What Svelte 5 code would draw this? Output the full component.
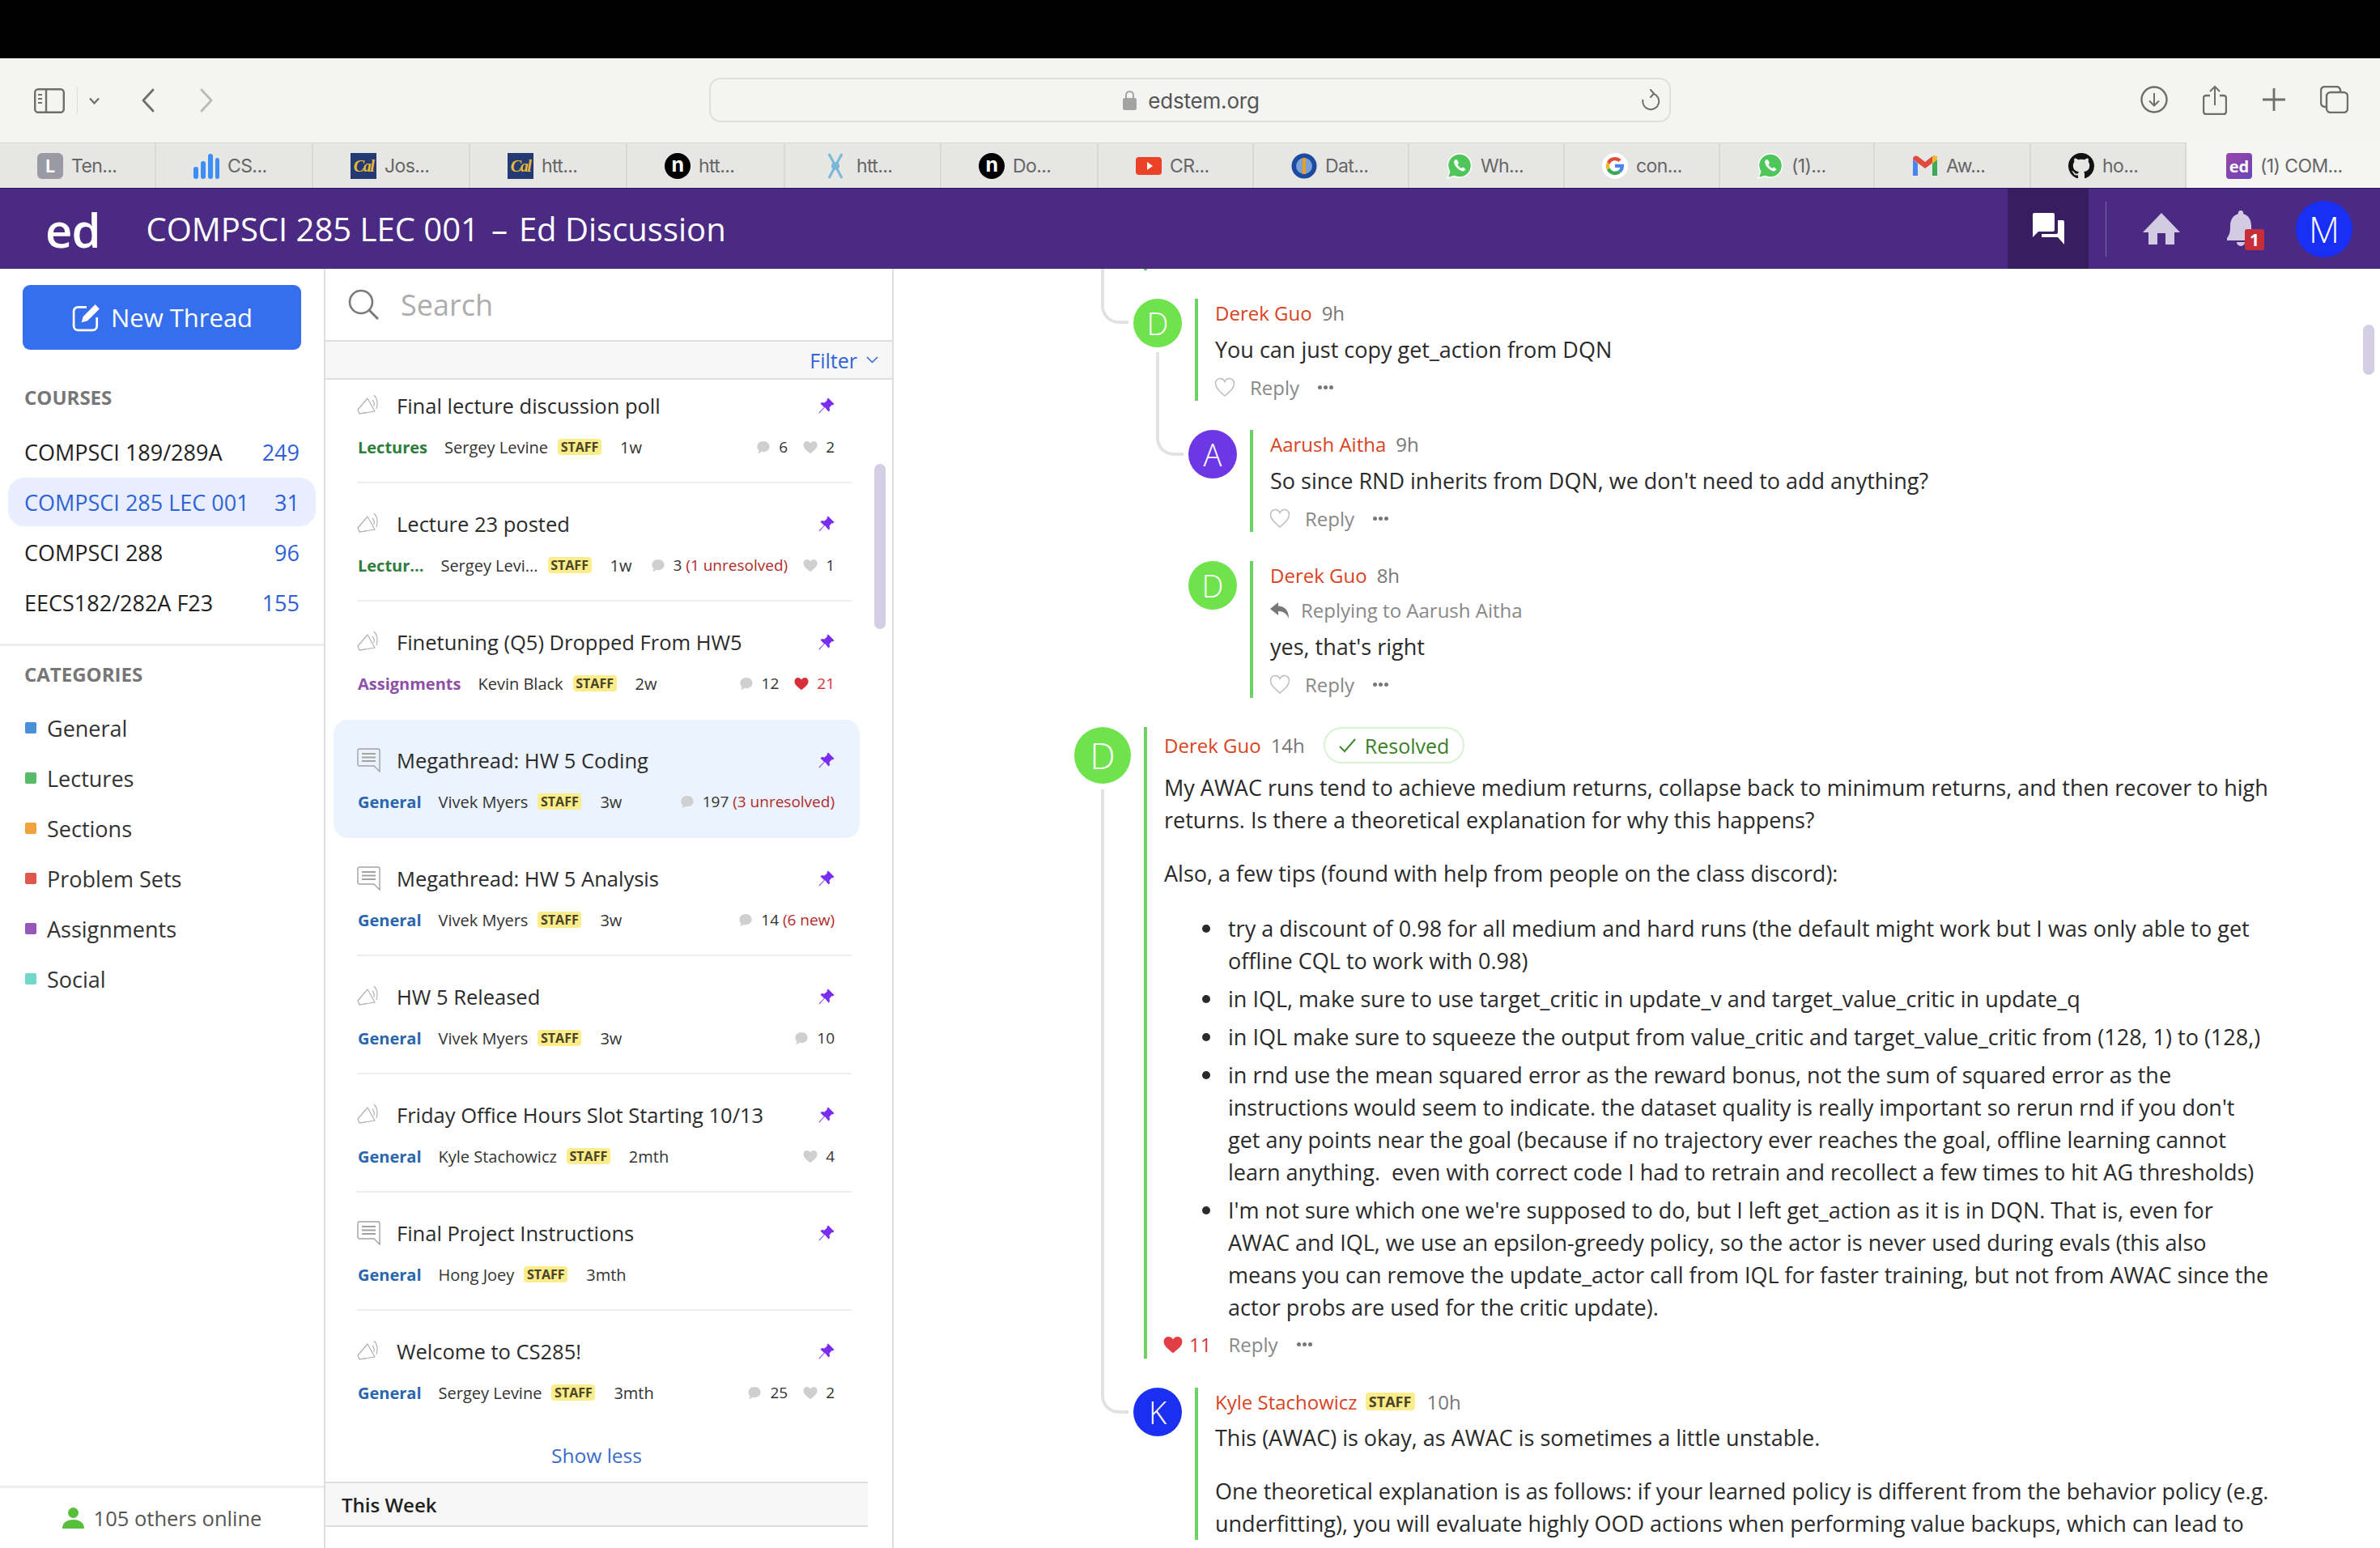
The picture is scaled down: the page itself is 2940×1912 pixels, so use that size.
<script>
  const tabs = [
    { k: 'L', t: 'Ten...', w: 193 }, { k: 'bars', t: 'CS...', w: 194 }, { k: 'cal', t: 'Jos...', w: 194 }, { k: 'cal', t: 'htt...', w: 194 },
    { k: 'n', t: 'htt...', w: 195 }, { k: 'x', t: 'htt...', w: 193 }, { k: 'n', t: 'Do...', w: 194 }, { k: 'yt', t: 'CR...', w: 192 },
    { k: 'dat', t: 'Dat...', w: 192 }, { k: 'wa', t: 'Wh...', w: 192 }, { k: 'g', t: 'con...', w: 192 }, { k: 'wa', t: '(1)...', w: 191 },
    { k: 'gm', t: 'Aw...', w: 193 }, { k: 'gh', t: 'ho...', w: 192 }
  ];
  const courses = [
    { n: 'COMPSCI 189/289A', c: 249 }, { n: 'COMPSCI 285 LEC 001', c: 31, active: true },
    { n: 'COMPSCI 288', c: 96 }, { n: 'EECS182/282A F23', c: 155 }
  ];
  const categories = [
    { n: 'General', c: '#4a90d9' }, { n: 'Lectures', c: '#57bb6a' }, { n: 'Sections', c: '#f0a33c' },
    { n: 'Problem Sets', c: '#e0574c' }, { n: 'Assignments', c: '#9557b8' }, { n: 'Social', c: '#6fd8c8' }
  ];
  const threads = [
    { i: 'mega', title: 'Final lecture discussion poll', cat: 'Lectures', cc: 'green', author: 'Sergey Levine', time: '1w', com: '6', likes: '2' },
    { i: 'mega', title: 'Lecture 23 posted', cat: 'Lectur...', cc: 'green', author: 'Sergey Levi...', time: '1w', com: '3', extra: '(1 unresolved)', likes: '1' },
    { i: 'mega', title: 'Finetuning (Q5) Dropped From HW5', cat: 'Assignments', cc: 'purple', author: 'Kevin Black', time: '2w', com: '12', likes: '21', liked: true, nodiv: true },
    { i: 'post', title: 'Megathread: HW 5 Coding', cat: 'General', cc: 'blue', author: 'Vivek Myers', time: '3w', com: '197', extra: '(3 unresolved)', sel: true, nodiv: true },
    { i: 'post', title: 'Megathread: HW 5 Analysis', cat: 'General', cc: 'blue', author: 'Vivek Myers', time: '3w', com: '14', extra: '(6 new)' },
    { i: 'mega', title: 'HW 5 Released', cat: 'General', cc: 'blue', author: 'Vivek Myers', time: '3w', com: '10' },
    { i: 'mega', title: 'Friday Office Hours Slot Starting 10/13', cat: 'General', cc: 'blue', author: 'Kyle Stachowicz', time: '2mth', likes: '4' },
    { i: 'post', title: 'Final Project Instructions', cat: 'General', cc: 'blue', author: 'Hong Joey', time: '3mth' },
    { i: 'mega', title: 'Welcome to CS285!', cat: 'General', cc: 'blue', author: 'Sergey Levine', time: '3mth', com: '25', likes: '2', nodiv: true }
  ];
</script>

{#snippet bubble()}
  <svg class="stat-ico" viewBox="0 0 18 18"><path d="M9 1c4.600 0 8 3 8 7s-3.400 7-8 7c-.9 0-1.800-.1-2.600-.4C5 16 3 17 1.500 17c1-1 1.500-2.300 1.600-3.700C1.800 12 1 10.100 1 8c0-4 3.400-7 8-7z" fill="#cfcfcf"/></svg>
{/snippet}
{#snippet heart(color, cls = 'stat-ico')}
  <svg class={cls} viewBox="0 0 20 18"><path d="M10 17.500C4 13 .5 9.800.5 5.700.5 2.800 2.700.7 5.300.7c2 0 3.700 1 4.700 2.800C11 1.700 12.700.7 14.700.7c2.600 0 4.800 2.100 4.800 5 0 4.100-3.500 7.300-9.500 11.800z" fill={color}/></svg>
{/snippet}
{#snippet outlineHeart()}
  <svg class="heart-line" viewBox="0 0 26 26"><path d="M13 24C6 18 1.500 14 1.500 8.500 1.500 4.800 4.300 2.500 7.300 2.500c2.500 0 4.600 1.500 5.700 4 1.100-2.500 3.200-4 5.700-4 3 0 5.800 2.300 5.800 6C24.500 14 20 18 13 24z" fill="none" stroke="#bdbdbd" stroke-width="1.500"/></svg>
{/snippet}
{#snippet actions()}
  <div class="actions">
    {@render outlineHeart()}
    <span class="reply">Reply</span>
    <span class="dots"><i></i><i></i><i></i></span>
  </div>
{/snippet}

<div class="page">
  <div class="blackbar"></div>

  <div class="toolbar">
    <div class="tb-left">
      <svg width="38" height="31" viewBox="0 0 38 31" fill="none" stroke="#6e6e6c" stroke-width="2.400"><rect x="1.200" y="1.200" width="35.600" height="28.600" rx="4"/><path d="M15 1.200v28.600"/><path d="M5 8h5M5 13h5M5 18h5" stroke-width="2"/></svg>
      <span class="tb-sep"></span>
      <svg width="15" height="9" viewBox="0 0 15 9" fill="none" stroke="#6e6e6c" stroke-width="2.200"><path d="M2 1.500l5.500 6 5.500-6"/></svg>
      <svg class="back" width="17" height="30" viewBox="0 0 17 30" fill="none" stroke="#6e6e6c" stroke-width="2.800" stroke-linecap="round" stroke-linejoin="round"><path d="M15 2L3 15l12 13"/></svg>
      <svg class="fwd" width="17" height="30" viewBox="0 0 17 30" fill="none" stroke="#b9b9b7" stroke-width="2.800" stroke-linecap="round" stroke-linejoin="round"><path d="M2 2l12 13L2 28"/></svg>
    </div>
    <div class="urlbar">
      <div class="url-center">
        <svg width="17" height="25" viewBox="0 0 17 25"><path d="M4 11V6.500a4.500 4.500 0 019 0V11" fill="none" stroke="#a3a3a3" stroke-width="2"/><rect x="0" y="10" width="17" height="15" rx="2.500" fill="#a3a3a3"/></svg>
        <span class="url">edstem.org</span>
      </div>
      <svg class="reload" width="24" height="27" viewBox="0 0 24 27" fill="none" stroke="#6e6e6c" stroke-width="2"><path d="M15 5.500A10 10 0 112.500 13"/><path d="M12 1l4 4.500-4 4.500" stroke-linecap="round"/></svg>
    </div>
    <div class="tb-right">
      <svg width="34" height="34" viewBox="0 0 34 34" fill="none" stroke="#6e6e6c" stroke-width="2.400"><circle cx="17" cy="17" r="15.500"/><path d="M17 9v15M11 18.500l6 6 6-6" stroke-width="2"/></svg>
      <svg width="30" height="37" viewBox="0 0 30 37" fill="none" stroke="#6e6e6c" stroke-width="2.400"><path d="M9 13H4a3 3 0 00-3 3v17a3 3 0 003 3h22a3 3 0 003-3V16a3 3 0 00-3-3h-5"/><path d="M15 25V2M9 8l6-6 6 6" stroke-width="2"/></svg>
      <svg width="28" height="28" viewBox="0 0 28 28" stroke="#6e6e6c" stroke-width="2.800"><path d="M14 0v28M0 14h28"/></svg>
      <svg width="35" height="34" viewBox="0 0 35 34" fill="none" stroke="#6e6e6c" stroke-width="2.400"><rect x="8" y="8" width="26" height="25" rx="5"/><path d="M8 26H6a5 5 0 01-5-5V6a5 5 0 015-5h14a5 5 0 015 5v2"/></svg>
    </div>
  </div>

  <div class="tabs">
    {#each tabs as tab}
      <div class="tab" style="width:{tab.w}px">
        {#if tab.k === 'L'}<span class="fav fav-l">L</span>
        {:else if tab.k === 'bars'}
          <svg class="fav" viewBox="0 0 32 32" fill="#3e8ef7"><rect x="0" y="17" width="6" height="15" rx="3"/><rect x="9" y="10" width="6" height="22" rx="3"/><rect x="18" y="1" width="6" height="31" rx="3"/><rect x="27" y="6" width="5" height="26" rx="2.500"/></svg>
        {:else if tab.k === 'cal'}<span class="fav fav-cal">Cal</span>
        {:else if tab.k === 'n'}<span class="fav fav-n">n</span>
        {:else if tab.k === 'x'}
          <svg class="fav" viewBox="0 0 32 32" fill="none" stroke="#7ab8d8" stroke-width="3"><path d="M8 1l16 30M24 1L8 31"/><circle cx="16" cy="16" r="5" fill="#7ab8d8" stroke="none"/></svg>
        {:else if tab.k === 'yt'}
          <svg class="fav" viewBox="0 0 32 32"><rect x="0" y="5" width="32" height="22" rx="4" fill="#ea4127"/><path d="M14 11l7 5-7 5z" fill="#fff"/></svg>
        {:else if tab.k === 'dat'}
          <svg class="fav" viewBox="0 0 32 32"><ellipse cx="16" cy="16" rx="15.500" ry="15.500" fill="#1e4aa0"/><circle cx="16" cy="16" r="10" fill="#7aa2d8"/><rect x="14" y="6" width="4" height="20" fill="#e8a020"/></svg>
        {:else if tab.k === 'wa'}
          <svg class="fav" viewBox="0 0 32 32"><path d="M16 1C7.700 1 1.500 7.500 1.500 15.500c0 2.800.8 5.500 2.200 7.700L1 31l8-2.500C11 29.500 13.500 30 16 30c8.300 0 14.500-6.500 14.500-14.500S24.300 1 16 1z" fill="#4fc65a" stroke="#fff" stroke-width="1.500"/><path d="M11 8c-2 1-2.500 3.500-1 6.500 1.500 3 4.500 6 8 7.500 2.500 1 4.500 0 5.500-2l-3.500-2.500-1.700 1.500c-2-1-3.800-2.800-4.800-5l1.500-1.500L13 8.500z" fill="#fff"/></svg>
        {:else if tab.k === 'g'}
          <svg class="fav" viewBox="0 0 32 32"><circle cx="16" cy="16" r="16" fill="#fff"/><path d="M16 5a11 11 0 017.600 3l-3 3A6.800 6.800 0 0016 9.300c-3 0-5.500 2-6.500 4.700L6 11.200A11 11 0 0116 5z" fill="#e04a3c"/><path d="M6 11.200L9.500 14a7 7 0 000 4.200L6 20.900a11 11 0 010-9.700z" fill="#f4b820"/><path d="M6 20.900l3.500-2.700c1 2.700 3.500 4.600 6.500 4.600 1.600 0 3-.4 4-1.200l3.300 2.700A11 11 0 016 20.900z" fill="#38a954"/><path d="M27 16c0 3.200-1.200 6.100-3.700 8.300L20 21.600c1.100-.8 1.900-2.100 2.300-3.700H16v-4.200h10.800c.1.700.2 1.500.2 2.300z" fill="#4a84f0"/></svg>
        {:else if tab.k === 'gm'}
          <svg class="fav" viewBox="0 0 32 32"><path d="M1 8l15 11L31 8v-1a4 4 0 00-6-3L16 11 7 4a4 4 0 00-6 3z" fill="#df4b3c"/><path d="M1 8v20h6V13z" fill="#4a84f0"/><path d="M31 8v20h-6V13z" fill="#3eaa55"/><path d="M25 4l6 0v4l-6 5z" fill="#f5bb2c"/></svg>
        {:else if tab.k === 'gh'}
          <svg class="fav" viewBox="0 0 16 16" fill="#111"><path d="M8 0C3.580 0 0 3.580 0 8c0 3.540 2.290 6.530 5.470 7.590.4.070.55-.17.55-.38 0-.19-.01-.82-.01-1.490-2.010.37-2.530-.49-2.690-.94-.09-.23-.48-.94-.82-1.130-.28-.15-.68-.52-.01-.53.630-.01 1.080.58 1.230.82.720 1.210 1.870.87 2.330.66.070-.52.280-.87.510-1.070-1.780-.2-3.640-.89-3.640-3.950 0-.87.310-1.590.820-2.150-.08-.2-.36-1.020.08-2.120 0 0 .67-.21 2.200.82.640-.18 1.320-.27 2-.27s1.360.09 2 .27c1.530-1.040 2.200-.82 2.200-.82.440 1.100.160 1.920.080 2.120.510.560.820 1.270.820 2.150 0 3.070-1.870 3.750-3.650 3.950.290.250.540.730.540 1.480 0 1.070-.01 1.930-.01 2.200 0 .210.150.460.550.380A8.010 8.010 0 0016 8c0-4.420-3.580-8-8-8z"/></svg>
        {/if}
        <span>{tab.t}</span>
      </div>
    {/each}
    <div class="tab active"><span class="fav fav-ed">ed</span><span>(1) COM...</span></div>
  </div>

  <header class="header">
    <span class="logo">ed</span>
    <span class="title">COMPSCI 285 LEC 001<span class="dash">–</span>Ed Discussion</span>
    <div class="hdr-right">
      <div class="hdr-chat">
        <svg width="39" height="39" viewBox="0 0 39 39" fill="#fff"><path d="M0 2a2 2 0 012-2h23a2 2 0 012 2v19a2 2 0 01-2 2H7l-7 7z"/><path d="M31 9h6a2 2 0 012 2v28l-8-9H11v-4h18a2 2 0 002-2z"/></svg>
      </div>
      <span class="hdr-sep"></span>
      <svg class="home" width="46" height="39" viewBox="0 0 46 39" fill="#d2cbe2"><path d="M23 0l23 24h-7v15H28V25H18v14H7V24H0z"/></svg>
      <div class="bell">
        <svg width="36" height="46" viewBox="0 0 36 46" fill="#d2cbe2"><path d="M18 0a3 3 0 013 4c7 2 10 8 10 15 0 8 1 11 4 15v3H1v-3c3-4 4-7 4-15 0-7 3-13 10-15a3 3 0 013-4z"/><path d="M13 39h10a5 5 0 01-10 0z"/></svg>
        <span class="bell-badge">1</span>
      </div>
      <span class="me">M</span>
    </div>
  </header>

  <div class="body">
    <aside class="sidebar">
      <button class="new-thread">
        <svg width="36" height="36" viewBox="0 0 34 34" fill="none"><path d="M17 5H7a5 5 0 00-5 5v17a5 5 0 005 5h17a5 5 0 005-5V17" stroke="#fff" stroke-width="2.600"/><path d="M27 2l5 5-14 14-7 2 2-7z" fill="#fff"/></svg>
        <span>New Thread</span>
      </button>
      <div class="side-label first">COURSES</div>
      <div class="courses">
        {#each courses as c}
          <div class="course" class:active={c.active}><span>{c.n}</span><span class="count">{c.c}</span></div>
        {/each}
      </div>
      <div class="side-div"></div>
      <div class="side-label">CATEGORIES</div>
      <div class="cats">
        {#each categories as cat}
          <div class="cat"><i class="sq" style="background:{cat.c}"></i><span>{cat.n}</span></div>
        {/each}
      </div>
      <div class="online">
        <svg width="27" height="26" viewBox="0 0 27 26" fill="#58bf3c"><ellipse cx="13.500" cy="6.500" rx="6.500" ry="6.500"/><path d="M0 26c0-7 5-11 13.500-11S27 19 27 26z"/></svg>
        <span>105 others online</span>
      </div>
    </aside>

    <section class="list">
      <div class="search">
        <svg width="38" height="38" viewBox="0 0 38 38" fill="none" stroke="#7a7a7a" stroke-width="2.600"><circle cx="16" cy="16" r="14"/><path d="M26 26l11 11" stroke-width="3"/></svg>
        <span>Search</span>
      </div>
      <div class="filter">
        <span>Filter</span>
        <svg width="15" height="9" viewBox="0 0 15 9" fill="none" stroke="#2f63d6" stroke-width="1.500"><path d="M1 1l6.500 6.500L14 1"/></svg>
      </div>
      <div class="scroll">
        <div class="scroll-in">
          {#each threads as t}
            <article class="thread" class:sel={t.sel} class:nodiv={t.nodiv}>
              <div class="t-title">
                {#if t.i === 'mega'}
                  <svg class="t-ico" width="30" height="30" viewBox="0 0 30 30" fill="none" stroke="#b0b0b0" stroke-width="1.200"><path d="M13 6L1 20l2 5 19-3z" stroke-linejoin="round"/><path d="M3 25l8-1"/><path d="M19 8c2 2 2.500 5 2 8" /><path d="M21 2c4 4 5 10 3 17"/></svg>
                {:else}
                  <svg class="t-ico" width="30" height="30" viewBox="0 0 30 30" fill="none" stroke="#a2a2a2" stroke-width="1.400"><path d="M3 1h23a2 2 0 012 2v26l-7-7H3a2 2 0 01-2-2V3a2 2 0 012-2z"/><path d="M6 7h17M6 11.500h17M6 16h17" stroke-width="1.800"/></svg>
                {/if}
                <span class="t-text">{t.title}</span>
                <svg class="pin" width="20" height="20" viewBox="0 0 20 20" fill="#7b2cf2"><path d="M12 .5l7.500 7.500-1.800 1.500-1-.6-3.200 3.700.5 3.400-1.500 1.500L8 12 2 18.500 1 19.500.500 19l1-1.500L7 12 2.500 7.500 4 6l3.400.5L11 3.300l-.6-1z"/></svg>
              </div>
              <div class="t-meta">
                <span class="t-cat {t.cc}">{t.cat}</span>
                <span class="t-author">{t.author}</span>
                <span class="staff">STAFF</span>
                <span class="t-time">{t.time}</span>
                <span class="t-stats">
                  {#if t.com}
                    <span class="stat">{@render bubble()}<span class="num">{t.com}{#if t.extra}&nbsp;<b>{t.extra}</b>{/if}</span></span>
                  {/if}
                  {#if t.likes}
                    <span class="stat">{@render heart(t.liked ? '#d8303a' : '#cfcfcf')}<span class="num" class:liked={t.liked}>{t.likes}</span></span>
                  {/if}
                </span>
              </div>
            </article>
          {/each}
          <div class="show-less">Show less</div>
          <div class="week">This Week</div>
        </div>
        <span class="list-thumb"></span>
      </div>
    </section>

    <main class="content">
      <div class="stub"></div>
      <div class="conn c1"></div>
      <div class="conn c2"></div>
      <div class="conn c3"></div>

      <div class="comment l2">
        <span class="av green">D</span>
        <div class="c-body">
          <div class="c-head"><span class="name">Derek Guo</span><span class="when">9h</span></div>
          <p class="c-text">You can just copy get_action from DQN</p>
          {@render actions()}
        </div>
      </div>

      <div class="comment l3">
        <span class="av purple">A</span>
        <div class="c-body">
          <div class="c-head"><span class="name">Aarush Aitha</span><span class="when">9h</span></div>
          <p class="c-text">So since RND inherits from DQN, we don't need to add anything?</p>
          {@render actions()}
        </div>
      </div>

      <div class="comment l3">
        <span class="av green">D</span>
        <div class="c-body">
          <div class="c-head"><span class="name">Derek Guo</span><span class="when">8h</span></div>
          <div class="replying">
            <svg width="24" height="20" viewBox="0 0 24 20" fill="#777"><path d="M10 0L0 8l10 8v-5c6 0 10 2 13 9 0-9-4-15-13-15.500z"/></svg>
            <span>Replying to Aarush Aitha</span>
          </div>
          <p class="c-text">yes, that's right</p>
          {@render actions()}
        </div>
      </div>

      <div class="comment l1">
        <span class="av green big">D</span>
        <div class="c-body">
          <div class="c-head tall">
            <span class="name">Derek Guo</span><span class="when">14h</span>
            <span class="resolved">
              <svg width="21" height="18" viewBox="0 0 21 18" fill="none" stroke="#3e8a2a" stroke-width="2"><path d="M1 10l6 6L20 1"/></svg>
              <span>Resolved</span>
            </span>
          </div>
          <div class="rich">
            <p>My AWAC runs tend to achieve medium returns, collapse back to minimum returns, and then recover to high<br>returns. Is there a theoretical explanation for why this happens?</p>
            <p>Also, a few tips (found with help from people on the class discord):</p>
            <ul>
              <li>try a discount of 0.98 for all medium and hard runs (the default might work but I was only able to get<br>offline CQL to work with 0.98)</li>
              <li>in IQL, make sure to use target_critic in update_v and target_value_critic in update_q</li>
              <li>in IQL make sure to squeeze the output from value_critic and target_value_critic from (128, 1) to (128,)</li>
              <li>in rnd use the mean squared error as the reward bonus, not the sum of squared error as the<br>instructions would seem to indicate. the dataset quality is really important so rerun rnd if you don't<br>get any points near the goal (because if no trajectory ever reaches the goal, offline learning cannot<br>learn anything.&nbsp; even with correct code I had to retrain and recollect a few times to hit AG thresholds)</li>
              <li>I'm not sure which one we're supposed to do, but I left get_action as it is in DQN. That is, even for<br>AWAC and IQL, we use an epsilon-greedy policy, so the actor is never used during evals (this also<br>means you can remove the update_actor call from IQL for faster training, but not from AWAC since the<br>actor probs are used for the critic update).</li>
            </ul>
          </div>
          <div class="actions main-act">
            {@render heart('#e23f44', 'heart-red')}
            <span class="likes">11</span>
            <span class="reply">Reply</span>
            <span class="dots"><i></i><i></i><i></i></span>
          </div>
        </div>
      </div>

      <div class="comment l2">
        <span class="av blue">K</span>
        <div class="c-body">
          <div class="c-head"><span class="name">Kyle Stachowicz</span><span class="staff big">STAFF</span><span class="when">10h</span></div>
          <div class="rich k">
            <p>This (AWAC) is okay, as AWAC is sometimes a little unstable.</p>
            <p>One theoretical explanation is as follows: if your learned policy is different from the behavior policy (e.g.<br>underfitting), you will evaluate highly OOD actions when performing value backups, which can lead to</p>
          </div>
        </div>
      </div>

      <span class="main-thumb"></span>
    </main>
  </div>
</div>

<style>
  :global(body) { margin: 0; background: #fff; }
  .page { width: 2940px; height: 1912px; display: flex; flex-direction: column; overflow: hidden; font-family: "Open Sans", "Noto Sans", sans-serif; color: #2a2a2a; }
  .blackbar { height: 72px; background: #000; flex: none; }

  .toolbar { height: 104px; flex: none; background: #f4f4f2; display: flex; align-items: center; position: relative; }
  .tb-left { width: 876px; display: flex; align-items: center; padding-left: 42px; box-sizing: border-box; }
  .tb-sep { width: 1px; height: 34px; background: #dcdcda; margin: 0 13px 0 15px; }
  .back { margin-left: 50px; }
  .fwd { margin-left: 56px; }
  .urlbar { width: 1188px; height: 55px; box-sizing: border-box; border: 2px solid #dfdfdd; border-radius: 14px; display: flex; align-items: center; justify-content: center; position: relative; margin-top: -1px; }
  .url-center { display: flex; align-items: center; gap: 14px; margin-left: 3px; }
  .url { font-family: "Inter", "Liberation Sans", sans-serif; font-size: 26px; color: #555; letter-spacing: -0.2px; margin-top: 1px; }
  .reload { position: absolute; right: 11px; top: 12px; }
  .tb-right { flex: 1; display: flex; align-items: center; justify-content: flex-end; gap: 43px; padding-right: 39px; margin-top: -2px; }
  .tb-right svg:nth-child(2) { margin-right: 1px; }

  .tabs { height: 56px; flex: none; display: flex; background: #e6e6e4; box-shadow: inset 0 1px 0 #d6d6d4; }
  .tab { flex: none; display: flex; align-items: center; gap: 10px; border-right: 2px solid #d8d8d6; font-size: 23px; color: #666; font-family: "Inter", "Liberation Sans", sans-serif; letter-spacing: -0.6px; padding: 2px 0 0 46px; box-sizing: border-box; white-space: nowrap; overflow: hidden; }
  .tab.active { flex: 1; background: #f5f5f3; border-right: none; box-shadow: none; padding-left: 49px; }
  .fav { width: 32px; height: 32px; flex: none; display: flex; align-items: center; justify-content: center; box-sizing: border-box; }
  .fav-l { background: #9a9aa4; color: #fff; border-radius: 6px; font-weight: 700; font-size: 21px; }
  .fav-cal { background: #233a72; color: #e9b93a; font: italic 700 20px "Liberation Serif", serif; letter-spacing: -1.5px; overflow: hidden; }
  .fav-n { background: #000; color: #fff; border-radius: 50%; font-weight: 700; font-size: 25px; padding-bottom: 5px; }
  .fav-ed { background: linear-gradient(135deg, #9a46a8, #6a44b8); color: #fff; border-radius: 4px; font: 700 20px "Open Sans", sans-serif; letter-spacing: 0; }

  .header { height: 100px; flex: none; background: #4b2a84; border-top: 1px solid #2e1466; box-sizing: border-box; display: flex; align-items: center; color: #fff; }
  .logo { font-size: 58px; font-weight: 600; margin-left: 56px; line-height: 1; letter-spacing: -1px; margin-top: 2px; }
  .title { font-size: 40px; margin-left: 57px; font-weight: 400; }
  .dash { margin: 0 14px 0 15px; }
  .hdr-right { margin-left: auto; height: 100%; display: flex; align-items: center; }
  .hdr-chat { width: 100px; height: 100%; background: #381e60; display: flex; align-items: center; justify-content: center; }
  .hdr-sep { width: 1px; height: 68px; background: #7f6aa6; margin: 0 45px 0 21px; }
  .bell { position: relative; margin-left: 57px; width: 36px; height: 46px; }
  .bell-badge { position: absolute; left: 23px; top: 23px; width: 24px; height: 26px; background: #c62f3a; border-radius: 3px; font-size: 21px; font-weight: 700; color: #fff; display: flex; align-items: center; justify-content: center; }
  .me { width: 70px; height: 70px; border-radius: 50%; background: #1a2ff5; display: flex; align-items: center; justify-content: center; font-size: 44px; margin: 0 34px 0 50px; font-weight: 300; }

  .body { flex: 1; display: flex; min-height: 0; }
  .sidebar { width: 402px; flex: none; box-sizing: border-box; border-right: 2px solid #dedede; display: flex; flex-direction: column; }
  .new-thread { margin: 20px 28px 0; height: 80px; border: none; border-radius: 9px; background: #366fee; color: #fff; font: 500 31px "Open Sans", sans-serif; display: flex; align-items: center; justify-content: center; gap: 12px; padding: 0 0 0 1px; flex: none; }
  .side-label { font-size: 24px; font-weight: 700; color: #777; line-height: 30px; margin: 20px 0 0 30px; }
  .side-label.first { margin-top: 44px; }
  .courses { margin-top: 22px; display: flex; flex-direction: column; gap: 2px; }
  .course { height: 60px; margin: 0 10px; padding: 0 20px 0 20px; display: flex; align-items: center; justify-content: space-between; border-radius: 20px; font-size: 27px; color: #222; }
  .course .count { color: #2f5fd8; }
  .course.active { background: #e8eefd; color: #2f63d6; }
  .side-div { height: 3px; background: #eee; margin-top: 21px; flex: none; }
  .cats { margin-top: 20px; display: flex; flex-direction: column; }
  .cat { height: 62px; display: flex; align-items: center; padding-left: 31px; gap: 13px; font-size: 27px; color: #333; }
  .sq { width: 14px; height: 14px; border-radius: 2px; flex: none; }
  .online { margin-top: auto; height: 77px; border-top: 3px solid #eee; box-sizing: border-box; display: flex; align-items: center; justify-content: center; gap: 12px; font-size: 25.5px; color: #555; }

  .list { width: 702px; flex: none; box-sizing: border-box; border-right: 2px solid #dedede; display: flex; flex-direction: column; min-height: 0; }
  .search { height: 90px; flex: none; box-sizing: border-box; border-bottom: 2px solid #dedede; display: flex; align-items: center; padding-left: 28px; gap: 27px; font-size: 36px; color: #adadad; }
  .filter { height: 47px; flex: none; box-sizing: border-box; background: #f7f7f7; border-bottom: 2px solid #dedede; display: flex; align-items: center; justify-content: flex-end; gap: 11px; padding-right: 17px; font-size: 25px; color: #2f63d6; font-weight: 500; }
  .scroll { flex: 1; min-height: 0; overflow: hidden; position: relative; }
  .scroll-in { width: 670px; margin-top: -18px; }
  .list-thumb { position: absolute; left: 678px; top: 104px; width: 14px; height: 204px; border-radius: 7px; background: #d3cee4; }
  .thread { height: 146px; margin: 0 10px; box-sizing: border-box; padding: 30px 31px 0 29px; position: relative; border-radius: 18px; }
  .thread::after { content: ""; position: absolute; left: 29px; right: 10px; bottom: 0; height: 2px; background: #eee; }
  .thread.nodiv::after { display: none; }
  .thread.sel { background: #ebf3fe; }
  .t-title { display: flex; align-items: center; height: 40px; }
  .t-ico { flex: none; }
  .t-text { margin-left: 19px; font-size: 25.5px; color: #2b2b2b; }
  .pin { margin-left: auto; flex: none; margin-right: 0; }
  .t-meta { display: flex; align-items: center; height: 30px; margin-top: 16px; padding-left: 1px; font-size: 20px; color: #333; white-space: nowrap; }
  .t-cat { font-weight: 700; margin-right: 21px; }
  .t-cat.green { color: #2f7d3c; }
  .t-cat.purple { color: #8e4fa8; }
  .t-cat.blue { color: #2a66ae; }
  .staff { margin-left: 12px; background: #fbec8c; color: #4a4426; font-size: 16px; font-weight: 700; height: 20px; width: 54px; display: inline-flex; align-items: center; justify-content: center; border-radius: 4px; }
  .t-time { margin-left: 23px; }
  .t-stats { margin-left: auto; display: flex; align-items: center; gap: 19px; font-size: 19px; }
  .stat { display: flex; align-items: center; gap: 10px; }
  :global(.stat-ico) { width: 18px; height: 17px; flex: none; }
  .num b { font-weight: 500; color: #b02a2a; }
  .num.liked { color: #d6343c; }
  .show-less { height: 65px; display: flex; align-items: center; justify-content: center; font-size: 24.5px; color: #3a6bc9; }
  .week { height: 56px; box-sizing: border-box; background: #f7f7f7; border-top: 2px solid #dedede; border-bottom: 2px solid #dedede; display: flex; align-items: center; padding-left: 20px; font-size: 24px; font-weight: 600; color: #222; }

  .content { flex: 1; min-width: 0; position: relative; overflow: hidden; padding-top: 37px; display: flex; flex-direction: column; gap: 36px; }
  .stub { position: absolute; left: 309px; top: 0; width: 4px; height: 2px; background: #6dd264; }
  .conn { position: absolute; border-left: 4px solid #e2e2e2; box-sizing: border-box; }
  .c1 { left: 256px; top: 0; width: 34px; height: 68px; border-bottom: 4px solid #e2e2e2; border-bottom-left-radius: 22px; }
  .c2 { left: 324px; top: 103px; width: 34px; height: 128px; border-bottom: 4px solid #e2e2e2; border-bottom-left-radius: 22px; }
  .c3 { left: 256px; top: 643px; width: 34px; height: 771px; border-bottom: 4px solid #e2e2e2; border-bottom-left-radius: 22px; }
  .comment { display: flex; gap: 16px; position: relative; flex: none; }
  .comment.l1 { margin-left: 223px; }
  .comment.l2 { margin-left: 296px; }
  .comment.l3 { margin-left: 364px; }
  .av { width: 60px; height: 60px; border-radius: 50%; color: #fff; display: flex; align-items: center; justify-content: center; font-size: 38px; flex: none; font-weight: 300; }
  .av.big { width: 70px; height: 70px; font-size: 44px; }
  .av.green { background: #6fe34c; }
  .av.purple { background: #6d37e6; }
  .av.blue { background: #1a2ff0; }
  .c-body { border-left: 4px solid #6dd264; padding-left: 21px; min-width: 0; }
  .c-head { display: flex; align-items: center; height: 36px; font-size: 24px; box-sizing: border-box; padding-bottom: 2px; }
  .c-head.tall { height: 45px; padding-bottom: 0; }
  .name { color: #d9431e; }
  .when { color: #777; margin-left: 12px; }
  .c-text { margin: 7px 0 0; font-size: 27px; line-height: 40px; color: #2a2a2a; }
  .actions { margin-top: 11px; height: 32px; box-sizing: border-box; padding-bottom: 2px; display: flex; align-items: center; font-size: 24px; color: #888; }
  .heart-line { width: 26px; height: 26px; flex: none; margin-left: -1px; }
  .reply { margin-left: 18px; }
  .dots { display: flex; gap: 2px; margin-left: 23px; }
  .dots i { width: 5px; height: 5px; border-radius: 50%; background: #777; }
  .replying { display: flex; align-items: center; gap: 14px; margin-top: 7px; padding-bottom: 1px; height: 35px; font-size: 24px; color: #888; }
  .resolved { margin-left: 23px; height: 45px; box-sizing: border-box; border: 2px solid #d8f2d2; border-radius: 23px; padding: 0 17px; display: flex; align-items: center; gap: 11px; color: #3a7f28; font-size: 25px; }
  .rich { font-size: 27px; line-height: 40px; color: #2a2a2a; margin-top: 10px; }
  .rich.k { margin-top: 6px; }
  .rich p { margin: 0 0 26px; }
  .rich p:last-child { margin-bottom: 0; }
  .rich ul { margin: 28px 0 0; padding-left: 79px; white-space: nowrap; list-style: none; }
  .rich li { margin-bottom: 7px; position: relative; }
  .rich li::before { content: ""; position: absolute; left: -32px; top: 15px; width: 10px; height: 10px; border-radius: 50%; background: #2a2a2a; }
  .rich li:last-child { margin-bottom: 0; }
  .main-act { margin-top: 11px; padding-bottom: 3px; }
  :global(.heart-red) { width: 24px; height: 22px; flex: none; margin-left: -1px; }
  .likes { color: #d6343c; margin-left: 8px; }
  .main-act .reply { margin-left: 21px; }
  .staff.big { margin-left: 10px; width: 61px; height: 22px; font-size: 18px; }
  .staff.big + .when { margin-left: 15px; }
  .main-thumb { position: absolute; right: 7px; top: 69px; width: 14px; height: 62px; border-radius: 7px; background: #d3cee4; }
</style>
